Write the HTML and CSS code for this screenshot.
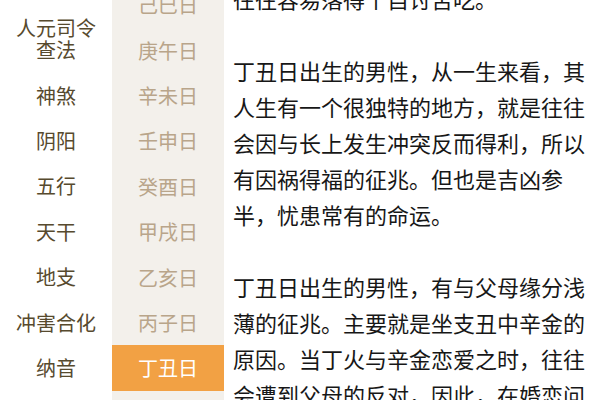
FILE: index.html
```html
<!DOCTYPE html>
<html lang="zh-CN">
<head>
<meta charset="utf-8">
<link rel="stylesheet" href="styles.css">
</head>
<body>
<div class="page">
  <div class="labels">
    <div class="label label-two">人元司令<br>查法</div>
    <div class="label">神煞</div>
    <div class="label">阴阳</div>
    <div class="label">五行</div>
    <div class="label">天干</div>
    <div class="label">地支</div>
    <div class="label">冲害合化</div>
    <div class="label">纳音</div>
  </div>
  <div class="days">
    <div class="day day-first">己巳日</div>
    <div class="day">庚午日</div>
    <div class="day">辛未日</div>
    <div class="day">壬申日</div>
    <div class="day">癸酉日</div>
    <div class="day">甲戌日</div>
    <div class="day">乙亥日</div>
    <div class="day">丙子日</div>
    <div class="day day-active">丁丑日</div>
    <div class="day">戊寅日</div>
  </div>
  <div class="article">
    <p class="para para-first">往往容易落得个自讨苦吃。</p>
    <p class="para">丁丑日出生的男性，从一生来看，其人生有一个很独特的地方，就是往往会因与长上发生冲突反而得利，所以有因祸得福的征兆。但也是吉凶参半，忧患常有的命运。</p>
    <p class="para">丁丑日出生的男性，有与父母缘分浅薄的征兆。主要就是坐支丑中辛金的原因。当丁火与辛金恋爱之时，往往会遭到父母的反对，因此，在婚恋问题上要多加注意。</p>
  </div>
</div>
</body>
</html>
```

FILE: styles.css
```css
html, body {
  margin: 0;
  padding: 0;
  background: #ffffff;
}
body {
  font-family: "Noto Sans CJK SC", "Noto Sans", sans-serif;
  overflow: hidden;
}
.page {
  width: 600px;
  height: 400px;
  display: grid;
  grid-template-columns: 112px 112px 1fr;
  overflow: hidden;
}
.labels {
  display: flex;
  flex-direction: column;
  padding-top: 5px;
  background: #ffffff;
}
.label {
  height: 45.4px;
  flex: none;
  display: flex;
  align-items: center;
  justify-content: center;
  text-align: center;
  font-size: 20px;
  line-height: 22px;
  color: #574a2e;
}
.label-two {
  height: 68px;
}
.days {
  display: flex;
  flex-direction: column;
  background: #f3f0eb;
}
.day {
  height: 45.4px;
  flex: none;
  display: flex;
  align-items: center;
  justify-content: center;
  font-size: 20px;
  color: #b9a58a;
}
.day-first {
  margin-top: -18px;
}
.day-active {
  background: #f2a144;
  color: #ffffff;
}
.article {
  padding: 0 10px 0 9px;
  min-width: 0;
}
.para {
  margin: 0 0 36px;
  font-size: 22px;
  line-height: 36px;
  color: #171717;
}
.para-first {
  margin-top: -20px;
}
```
